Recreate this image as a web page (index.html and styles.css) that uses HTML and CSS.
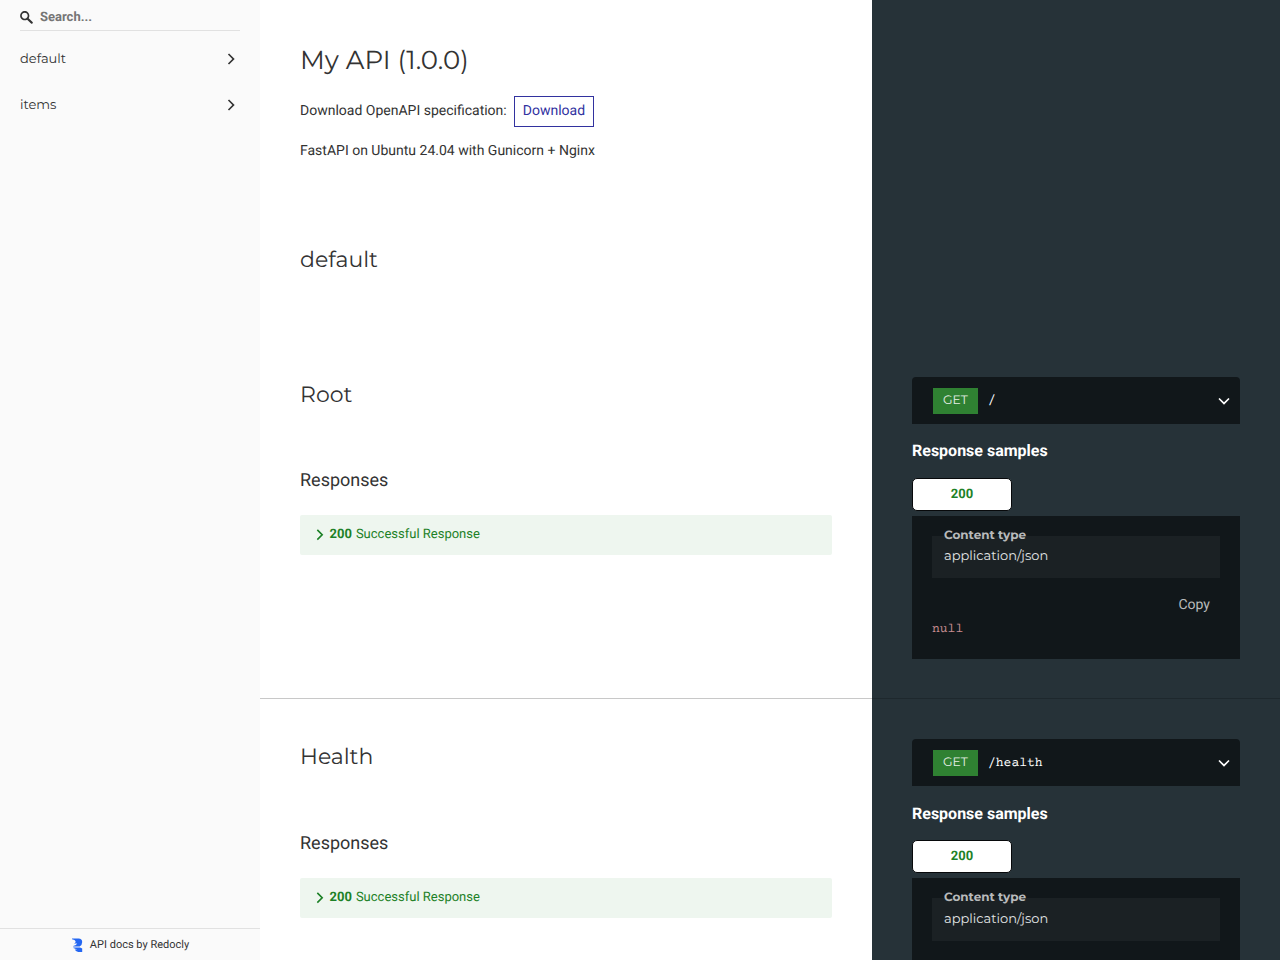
FILE: index.html
```
<!DOCTYPE html>
<html lang="en">
<head>
<meta charset="utf-8">
<title>My API</title>
<link rel="stylesheet" href="styles.css">
</head>
<body>
<svg class="defs" width="0" height="0">
  <symbol id="chevron" viewBox="0 0 24 24"><polygon points="17.3 8.3 12 13.6 6.7 8.3 5.3 9.7 12 16.4 18.7 9.7"/></symbol>
</svg>
<div class="app">
  <aside class="sidebar">
    <div class="search">
      <svg class="search-icon" viewBox="0 0 1000 1000"><path d="M968.2,849.4L667.3,549c83.9-136.5,66.7-317.4-51.7-435.6C477.1-25,252.5-25,113.9,113.4c-138.5,138.3-138.5,362.6,0,501C219.2,730.1,413.2,743,547.6,666.5l301.9,301.4c43.6,43.6,76.9,14.9,104.2-12.4C981,928.3,1011.8,893,968.2,849.4z M524.5,522c-88.9,88.7-233,88.7-321.8,0c-88.9-88.7-88.9-232.6,0-321.3c88.9-88.7,233-88.7,321.8,0C613.4,289.4,613.4,433.3,524.5,522z"/></svg>
      <span>Search...</span>
    </div>
    <nav class="menu">
      <a class="menu-item"><span>default</span><svg class="chev right"><use href="#chevron"/></svg></a>
      <a class="menu-item"><span>items</span><svg class="chev right"><use href="#chevron"/></svg></a>
    </nav>
    <footer class="credit">
      <svg class="logo" viewBox="0 0 12 14"><path d="M1 .5H7.5Q11.2 .8 11.2 4Q11.2 7 8.6 8.4H2.2V8Q5.6 7.6 6.2 5.6H3Q4.8 4.8 4.6 3.2Q4.2 1.6 1 1.2ZM2.4 9.4H9L11.2 10.4V14H7.2Q4.4 13.2 3.8 11.4H6.2Q4.2 10.6 2.4 10Z"/></svg>
      <span>API docs by Redocly</span>
    </footer>
  </aside>
  <main class="content">
    <section class="row intro">
      <div class="middle">
        <h1>My API (1.0.0)</h1>
        <p class="download">Download OpenAPI specification:<a class="button">Download</a></p>
        <p>FastAPI on Ubuntu 24.04 with Gunicorn + Nginx</p>
      </div>
    </section>
    <section class="row tag"><div class="middle"><h2>default</h2></div></section>
    <section class="row operation">
      <div class="middle">
        <h2>Root</h2>
        <h3>Responses</h3>
        <div class="response"><svg class="chev right"><use href="#chevron"/></svg><strong>200</strong><span>Successful Response</span></div>
      </div>
      <div class="samples">
        <div class="endpoint"><span class="verb">GET</span><span class="path">/</span><svg class="chev"><use href="#chevron"/></svg></div>
        <h4>Response samples</h4>
        <div class="tab">200</div>
        <div class="panel">
          <div class="mime"><span class="mime-label">Content type</span><span class="mime-value">application/json</span></div>
          <div class="copy">Copy</div>
          <code>null</code>
        </div>
      </div>
    </section>
    <section class="row operation last">
      <div class="middle">
        <h2>Health</h2>
        <h3>Responses</h3>
        <div class="response"><svg class="chev right"><use href="#chevron"/></svg><strong>200</strong><span>Successful Response</span></div>
      </div>
      <div class="samples">
        <div class="endpoint"><span class="verb">GET</span><span class="path">/health</span><svg class="chev"><use href="#chevron"/></svg></div>
        <h4>Response samples</h4>
        <div class="tab">200</div>
        <div class="panel">
          <div class="mime"><span class="mime-label">Content type</span><span class="mime-value">application/json</span></div>
        </div>
      </div>
    </section>
  </main>
</div>
</body>
</html>
```
FILE: styles.css
```
* { box-sizing: border-box; }
body { margin: 0; font: 14px/21px Roboto, sans-serif; color: #333; overflow: hidden; text-rendering: geometricPrecision; -webkit-font-smoothing: antialiased; }
h1, h2, h3, h4, p { margin: 0; font-weight: 400; }
.defs { display: none; }
.app { display: flex; height: 960px; overflow: hidden; }

.sidebar { width: 260px; background: #fafafa; display: flex; flex-direction: column; }
.search { margin: 5px 20px 0; height: 26px; border-bottom: 1px solid #e1e1e1; display: flex; align-items: center; gap: 7px; font-size: 13px; font-weight: 700; color: #757575; }
.search-icon { width: 13px; height: 13px; fill: #333; }
.menu { display: flex; flex-direction: column; padding-top: 5px; }
.menu-item { height: 46px; padding: 0 19px 0 20px; display: flex; align-items: center; justify-content: space-between; font: 13px/20px Montserrat, Inter, sans-serif; }
.chev { width: 20px; height: 20px; fill: currentColor; flex: none; }
.right { transform: rotate(-90deg); }
.credit { margin-top: auto; height: 32px; border-top: 1px solid #e1e1e1; display: flex; align-items: center; justify-content: center; gap: 7px; font-size: 11px; }
.logo { width: 12px; height: 14px; fill: #2467f2; }

.content { flex: 1; background: linear-gradient(to right, #fff 612px, #263238 612px); }
.row { display: flex; }
.middle { width: 612px; padding: 0 40px; }
.intro { height: 200px; padding-top: 39px; }
h1 { font: 400 26px/42px Montserrat, Inter, sans-serif; }
.download { height: 31px; margin: 15px 0 14px; display: flex; align-items: center; }
.button { margin-left: 7px; padding: 4px 8px; height: 31px; border: 1px solid #32329f; color: #32329f; }
.tag { height: 137px; padding-top: 42px; }
h2 { font: 400 22px/35px Montserrat, Inter, sans-serif; }
.operation { height: 362px; padding-top: 40px; border-bottom: 1px solid #bdbdbd; border-image: linear-gradient(to right, #c8c8c8 612px, #1e282d 612px) 1; }
.last { border: 0; height: 261px; overflow: hidden; }
h3 { font-size: 18px; line-height: 29px; margin: 54px 0 20px; }
.last h3 { margin-top: 55px; }
.response { height: 40px; border-radius: 2px; background: #eef6ef; color: #1d8127; display: flex; align-items: center; padding: 0 0 1px 11px; font-size: 13px; }
.response .chev { width: 19.5px; height: 19.5px; margin: 1px -1px 0 -1px; }
.response strong { margin: 0 4px 0 1px; }
.samples { width: 408px; padding: 0 40px; color: #fff; }
.endpoint { height: 47px; border-radius: 4px 4px 0 0; background: #11171a; display: flex; align-items: center; padding: 0 6px 0 21px; }
.verb { width: 45px; height: 26px; background: #2f8132; color: #e6efe6; text-align: center; font: 12.3px/25px Montserrat, Inter, sans-serif; }
.path { flex: 1; margin-left: 10px; font: 13px/20px "Courier Prime", "Liberation Mono", monospace; }
.last .path { padding-top: 2px; }
h4 { font-size: 16px; font-weight: 700; line-height: 26px; margin: 14px 0; }
.last h4 { margin: 15px 0 13px; }
.tab { width: 100px; height: 33px; margin-bottom: 5px; border: 1px solid #07090b; border-radius: 5px; background: #fff; color: #1d8127; text-align: center; font-weight: 700; font-size: 13px; line-height: 31px; }
.panel { height: 143px; background: #11171a; padding: 20px; }
.mime { height: 42px; background: #1b2124; padding: 0 12px; display: flex; flex-direction: column; font-family: Montserrat, Inter, sans-serif; }
.last .mime { height: 43px; }
.mime-label { font-size: 12px; font-weight: 700; line-height: 16px; margin-top: -8px; color: #b8babb; }
.mime-value { font-size: 13px; line-height: 20px; margin-top: 2px; color: #e1e4e5; }
.last .mime-value { margin-top: 3px; }
.copy { text-align: right; padding-right: 10px; margin-top: 17px; color: #b8babb; }
code { display: block; font: 13px/20px "Courier Prime", "Liberation Mono", monospace; color: #c88d91; margin-top: 4px; }
```
